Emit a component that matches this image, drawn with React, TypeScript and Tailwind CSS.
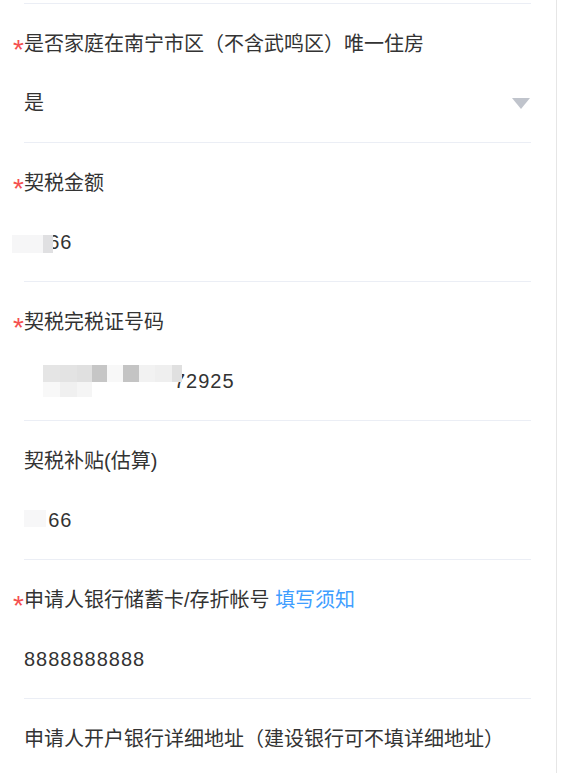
import React from "react";

const FONT = {
  fontFamily: '"Liberation Sans", "Noto Sans CJK SC", sans-serif',
};

function Star() {
  return (
    <span className="absolute left-[-11px] top-[6px] text-[28px] leading-[28px] text-[#f5504f]">
      *
    </span>
  );
}

function Row({
  label,
  required,
  children,
}: {
  label: React.ReactNode;
  required?: boolean;
  children: React.ReactNode;
}) {
  return (
    <div className="ml-6 mr-[25px] border-t border-[#ebeef5] pt-[26px] pb-[25px]">
      <div className="relative h-7 text-[20px] leading-7 text-[#333] whitespace-nowrap">
        {required && <Star />}
        {label}
      </div>
      <div className="relative mt-[31px] h-7 text-[20px] leading-7 text-[#333] tracking-[1px] whitespace-nowrap">
        {children}
      </div>
    </div>
  );
}

export default function App() {
  return (
    <div className="h-[773px] overflow-hidden bg-white flex" style={FONT}>
      <div className="w-[557px] border-r border-[#e6e6e6] pt-[3px]">
        <Row label="是否家庭在南宁市区（不含武鸣区）唯一住房" required>
          <div className="flex items-center justify-between">
            <span>是</span>
            <svg width="18" height="11" viewBox="0 0 18 11" className="mr-[1px]">
              <path d="M0 0 H18 L9 11 Z" fill="#c0c4cc" />
            </svg>
          </div>
        </Row>

        <Row label="契税金额" required>
          <span className="invisible">13</span>66
          {/* mosaic overlay */}
          <div className="absolute left-[-12px] top-[7px] flex h-[18px]">
            <div className="w-[31px] bg-[#f6f6f7]" />
            <div className="w-[10px] bg-[#e0e0e2]" />
          </div>
        </Row>

        <Row label="契税完税证号码" required>
          <span className="inline-block w-[150px]" />
          72925
          {/* mosaic overlay */}
          <div className="absolute left-[19px] top-[-2px] flex flex-col">
            <div className="flex h-[17px]">
              <div className="w-[17px] bg-[#e5e5e5]" />
              <div className="w-[17px] bg-[#e3e3e3]" />
              <div className="w-[15px] bg-[#e0e0e0]" />
              <div className="w-[15px] bg-[#c6c6c6]" />
              <div className="w-[16px] bg-[#f8f8f8]" />
              <div className="w-[16px] bg-[#c4c4c4]" />
              <div className="w-[16px] bg-[#f2f2f2]" />
              <div className="w-[17px] bg-[#efefef]" />
              <div className="w-[10px] bg-[#e0e0e0]" />
            </div>
            <div className="flex h-[15px]">
              <div className="w-[17px] bg-[#f8f8f8]" />
              <div className="w-[17px] bg-[#f0f0f0]" />
              <div className="w-[15px] bg-[#f5f5f5]" />
            </div>
          </div>
        </Row>

        <Row label="契税补贴(估算)">
          <span className="invisible">13</span>66
          <div className="absolute left-0 top-[4px] h-[17px] w-[22px] bg-[#f7f7f8]" />
        </Row>

        <Row
          label={
            <>
              申请人银行储蓄卡/存折帐号 <span className="text-[#409eff]">填写须知</span>
            </>
          }
          required
        >
          8888888888
        </Row>

        <Row label="申请人开户银行详细地址（建设银行可不填详细地址）">
          <span />
        </Row>
      </div>
    </div>
  );
}
